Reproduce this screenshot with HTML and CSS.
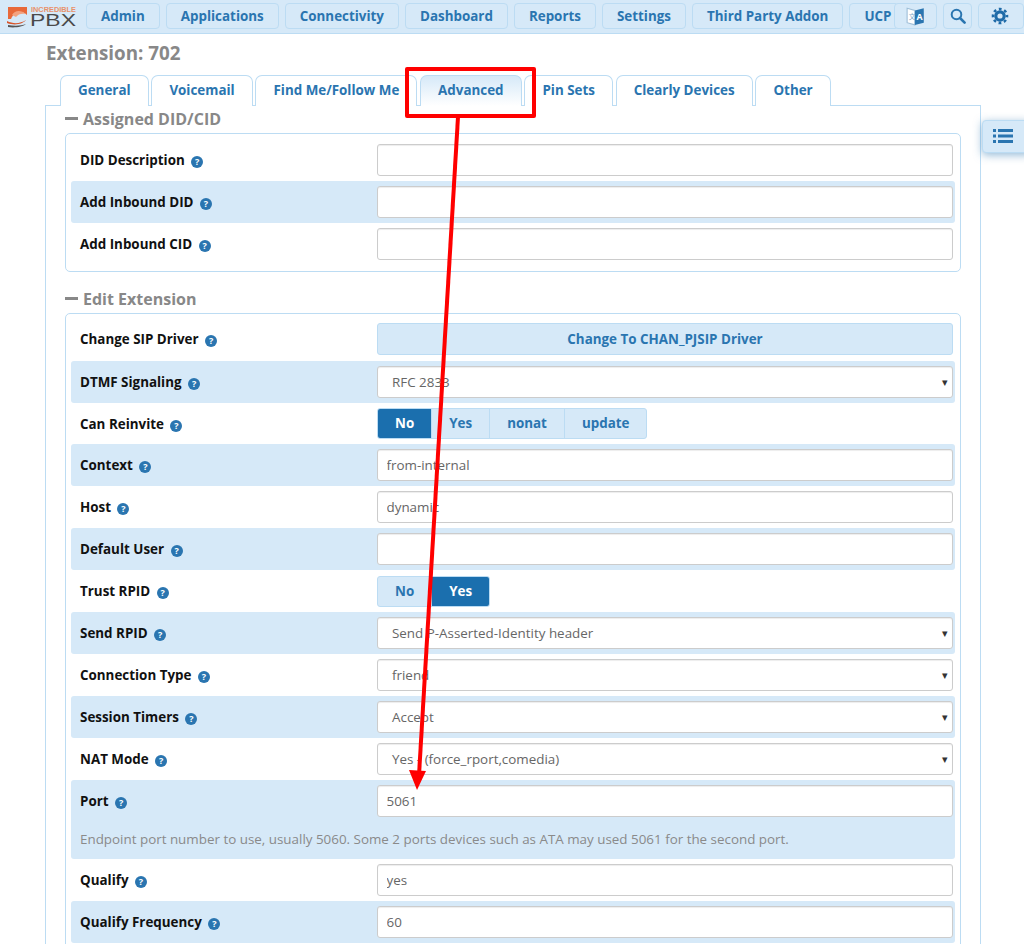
FILE: index.html
```html
<!DOCTYPE html>
<html lang="en">
<head>
<meta charset="utf-8">
<title>Extension: 702</title>
<link rel="stylesheet" href="styles.css">
</head>
<body>
<header class="topbar">
  <div class="logo">
    <svg width="80" height="30" viewBox="0 0 80 30">
      <path d="M8 7h19v8c-3-3-7-4-10-2-3 1-5 3-6 6H8z" fill="#e8693a"/>
      <path d="M12 15c3-5 9-5 14-1-4-1-8 0-10 3z" fill="#f3a27f"/>
      <path d="M7 21c6 3 13 3 19-1-3 4-11 6-19 3z" fill="#d8552a"/>
      <path d="M8 25c6 1 13 1 18-1-3 3-12 4-18 3z" fill="#555"/>
      <text class="logo-small" x="31" y="12" textLength="45" lengthAdjust="spacingAndGlyphs">INCREDIBLE</text>
      <text class="logo-big" x="30" y="26" textLength="46" lengthAdjust="spacingAndGlyphs">PBX</text>
    </svg>
  </div>
  <nav class="menu">
    <a class="menu-btn">Admin</a>
    <a class="menu-btn">Applications</a>
    <a class="menu-btn">Connectivity</a>
    <a class="menu-btn">Dashboard</a>
    <a class="menu-btn">Reports</a>
    <a class="menu-btn">Settings</a>
    <a class="menu-btn">Third Party Addon</a>
    <a class="menu-btn menu-ucp">UCP</a>
    <a class="menu-btn icon-btn lang-btn">
      <svg width="20" height="20" viewBox="0 0 18 18">
        <path d="M1 2l7 2v13l-7-2z" fill="#fff" stroke="#9fbfd8" stroke-width="1"/>
        <path d="M8 4l8-2v13l-8 2z" fill="#2a75b0"/>
        <text class="lang-a" x="9.5" y="13">A</text>
        <text class="lang-z" x="2.5" y="12">文</text>
      </svg>
    </a>
    <a class="menu-btn icon-btn search-btn">
      <svg width="16" height="16" viewBox="0 0 16 16" fill="none" stroke="#2a75b0">
        <circle cx="6.5" cy="6.5" r="4.8" stroke-width="2"/>
        <path d="M10 10l4.6 4.6" stroke-width="2.6" stroke-linecap="round"/>
      </svg>
    </a>
    <a class="menu-btn icon-btn gear-btn">
      <svg width="18" height="18" viewBox="0 0 18 18" fill="none" stroke="#1f6ba8">
        <circle cx="9" cy="9" r="4.2" stroke-width="3.2"/>
        <circle cx="9" cy="9" r="7" stroke-width="2.6" stroke-dasharray="2.75 2.75" stroke-dashoffset="1.4"/>
      </svg>
    </a>
  </nav>
</header>

<main class="page">
  <h1 class="title">Extension: 702</h1>
  <ul class="tabs">
    <li class="tab">General</li>
    <li class="tab">Voicemail</li>
    <li class="tab">Find Me/Follow Me</li>
    <li class="tab tab-active">Advanced</li>
    <li class="tab">Pin Sets</li>
    <li class="tab">Clearly Devices</li>
    <li class="tab">Other</li>
  </ul>

  <section class="panel">
    <h2 class="section-head first"><span class="minus"></span>Assigned DID/CID</h2>
    <div class="box">
      <div class="row"><label class="label">DID Description <i class="help">?</i></label><input class="field" value=""></div>
      <div class="row alt"><label class="label">Add Inbound DID <i class="help">?</i></label><input class="field" value=""></div>
      <div class="row"><label class="label">Add Inbound CID <i class="help">?</i></label><input class="field" value=""></div>
    </div>

    <h2 class="section-head"><span class="minus"></span>Edit Extension</h2>
    <div class="box box-edit">
      <div class="row row-first"><label class="label">Change SIP Driver <i class="help">?</i></label><button class="wide-btn">Change To CHAN_PJSIP Driver</button></div>
      <div class="row alt"><label class="label">DTMF Signaling <i class="help">?</i></label><div class="select">RFC 2833</div></div>
      <div class="row row-btn"><label class="label">Can Reinvite <i class="help">?</i></label>
        <div class="toggle"><span class="opt on">No</span><span class="opt">Yes</span><span class="opt">nonat</span><span class="opt">update</span></div></div>
      <div class="row alt"><label class="label">Context <i class="help">?</i></label><input class="field" value="from-internal"></div>
      <div class="row"><label class="label">Host <i class="help">?</i></label><input class="field" value="dynamic"></div>
      <div class="row alt"><label class="label">Default User <i class="help">?</i></label><input class="field" value=""></div>
      <div class="row"><label class="label">Trust RPID <i class="help">?</i></label>
        <div class="toggle"><span class="opt">No</span><span class="opt on">Yes</span></div></div>
      <div class="row alt"><label class="label">Send RPID <i class="help">?</i></label><div class="select">Send P-Asserted-Identity header</div></div>
      <div class="row"><label class="label">Connection Type <i class="help">?</i></label><div class="select">friend</div></div>
      <div class="row alt"><label class="label">Session Timers <i class="help">?</i></label><div class="select">Accept</div></div>
      <div class="row"><label class="label">NAT Mode <i class="help">?</i></label><div class="select">Yes - (force_rport,comedia)</div></div>
      <div class="row alt row-help"><label class="label">Port <i class="help">?</i></label><input class="field" value="5061">
        <p class="hint">Endpoint port number to use, usually 5060. Some 2 ports devices such as ATA may used 5061 for the second port.</p></div>
      <div class="row"><label class="label">Qualify <i class="help">?</i></label><input class="field" value="yes"></div>
      <div class="row alt"><label class="label">Qualify Frequency <i class="help">?</i></label><input class="field" value="60"></div>
    </div>
  </section>
</main>

<a class="side-btn">
  <svg width="20" height="16" viewBox="0 0 20 16" fill="#2a75b0">
    <rect x="0" y="1" width="3" height="3"/><rect x="5" y="1" width="15" height="3"/>
    <rect x="0" y="6.5" width="3" height="3"/><rect x="5" y="6.5" width="15" height="3"/>
    <rect x="0" y="12" width="3" height="3"/><rect x="5" y="12" width="15" height="3"/>
  </svg>
</a>

<div class="callout"></div>
<svg class="arrow" width="1024" height="944" viewBox="0 0 1024 944">
  <path d="M458 117L419 775" stroke="#f00" stroke-width="4" fill="none"/>
  <path d="M409 770L426 771L417 790z" fill="#f00"/>
</svg>
</body>
</html>
```
FILE: styles.css
```css
html, body {
  margin: 0;
  height: 944px;
  overflow: hidden;
  background: #fff;
}
body {
  position: relative;
  font-family: "Open Sans", "Noto Sans", sans-serif;
  font-size: 13.4px;
  color: #111;
}
* { box-sizing: border-box; }

.topbar {
  height: 34px;
  display: flex;
  align-items: flex-start;
  background: #d6e9f8;
  border-bottom: 1px solid #bcdcf3;
  overflow: hidden;
}
.logo { width: 86px; height: 33px; flex: none; }
.logo svg { display: block; }
.logo-small { font: 700 7px "Liberation Sans", sans-serif; fill: #e8926b; }
.logo-big { font: 400 17px "Liberation Sans", sans-serif; fill: #4a4a4a; }
.menu { display: flex; gap: 6px; padding-top: 3px; }
.menu-btn {
  height: 26px;
  padding: 0 14px;
  display: flex;
  align-items: center;
  flex: none;
  font-weight: 700;
  font-size: 13.4px;
  color: #2a75b0;
  background: #d6e9f8;
  border: 1px solid #bcdcf3;
  border-radius: 4px;
}
.menu-ucp { width: 50px; }
.icon-btn { justify-content: center; padding: 0; }
.lang-btn { width: 43px; position: relative; }
.search-btn { width: 29px; }
.gear-btn { width: 46px; padding-right: 3px; }
.lang-a { font: 700 8px "Open Sans", sans-serif; fill: #fff; }
.lang-z { font: 400 6px "Noto Sans CJK SC", sans-serif; fill: #7fa8c8; }
.menu-ucp + .lang-btn { margin-left: -11px; }

.page { padding: 0 43px 0 45px; }
.title {
  margin: 0;
  height: 41px;
  padding: 7px 0 0 1px;
  font-size: 18.8px;
  line-height: 25px;
  font-weight: 700;
  color: #888;
}
.tabs {
  display: flex;
  gap: 2.8px;
  margin: 0;
  padding: 0 0 0 15px;
  list-style: none;
  position: relative;
  height: 30px;
}
.tab {
  height: 31px;
  padding: 0 17px;
  line-height: 29px;
  font-weight: 700;
  font-size: 13.4px;
  color: #2a75b0;
  background: #fff;
  border: 1px solid #bcdcf3;
  border-bottom: 0;
  border-radius: 7px 7px 0 0;
  position: relative;
}
.tab-active {
  background: linear-gradient(#d6e9f8, #fff);
  z-index: 1;
}

.panel {
  width: 936px;
  height: 900px;
  padding: 0 19px;
  border: 1px solid #bcdcf3;
}
.section-head {
  display: flex;
  align-items: center;
  margin: 0;
  height: 27px;
  padding-bottom: 2px;
  font-size: 16px;
  font-weight: 700;
  color: #888;
}
.minus {
  width: 13px;
  height: 3px;
  margin-right: 5px;
  background: #888;
}
.box {
  padding: 5px 5px 6px;
  margin-bottom: 14px;
  background: #fff;
  border: 1px solid #bcdcf3;
  border-radius: 5px;
}
.box-edit { padding-top: 4px; }

.row {
  display: grid;
  grid-template-columns: 297px 1fr;
  align-items: center;
  height: 42px;
  padding: 0 2px 0 9px;
  border-radius: 3px;
}
.row.alt { background: #d6e9f8; }
.row-first { height: 43px; padding-bottom: 1px; }
.row-btn { height: 41px; }
.row-help {
  height: 79px;
  align-items: start;
  padding-top: 5px;
}
.row-help .label { padding-top: 7px; }
.label { font-weight: 700; font-size: 13.4px; color: #111; }
.help {
  display: inline-block;
  width: 12px;
  height: 12px;
  margin-left: 3px;
  border-radius: 50%;
  background: #2a75b0;
  color: #fff;
  font: 700 9px/12px "Open Sans", sans-serif;
  text-align: center;
  vertical-align: 0;
}
.field, .select {
  width: 100%;
  height: 32px;
  padding: 0 8.5px;
  font-family: inherit;
  font-size: 13.4px;
  color: #666;
  background: #fff;
  border: 1px solid #ccc;
  border-radius: 3px;
  box-shadow: inset 0 1px 1px rgba(0,0,0,.075);
}
.select {
  position: relative;
  padding-left: 14px;
  line-height: 31px;
}
.select::after {
  content: "▾";
  position: absolute;
  right: 4px;
  top: -1px;
  color: #333;
  font-size: 11px;
}
.wide-btn {
  width: 100%;
  height: 32px;
  padding: 0;
  font-family: inherit;
  font-size: 13.4px;
  font-weight: 700;
  color: #2a75b0;
  background: #d6e9f8;
  border: 1px solid #bcdcf3;
  border-radius: 3px;
}
.toggle {
  display: inline-flex;
  justify-self: start;
  height: 31px;
  background: #d6e9f8;
  border: 1px solid #bcdcf3;
  border-radius: 3px;
  overflow: hidden;
}
.opt {
  padding: 0 17px;
  line-height: 29px;
  font-weight: 700;
  font-size: 13.4px;
  color: #2a75b0;
  border-left: 1px solid #bcdcf3;
}
.opt:first-child { border-left: 0; }
.opt.on { background: #1b6fae; color: #fff; }
.hint {
  grid-column: 1 / -1;
  margin: 1px 0 0;
  font-size: 13.4px;
  color: #8a8a8a;
}

.side-btn {
  position: absolute;
  left: 982px;
  top: 120px;
  width: 50px;
  height: 33px;
  padding: 7px 0 0 10px;
  background: #d6e9f8;
  border: 1px solid #bcdcf3;
  border-radius: 4px;
  box-shadow: 0 2px 8px rgba(42,117,176,.5);
}
.side-btn svg { display: block; }

.callout {
  position: absolute;
  left: 405px;
  top: 67px;
  width: 131px;
  height: 51px;
  border: 4px solid #f00;
  border-radius: 2px;
}
.arrow {
  position: absolute;
  left: 0;
  top: 0;
  pointer-events: none;
}
```
